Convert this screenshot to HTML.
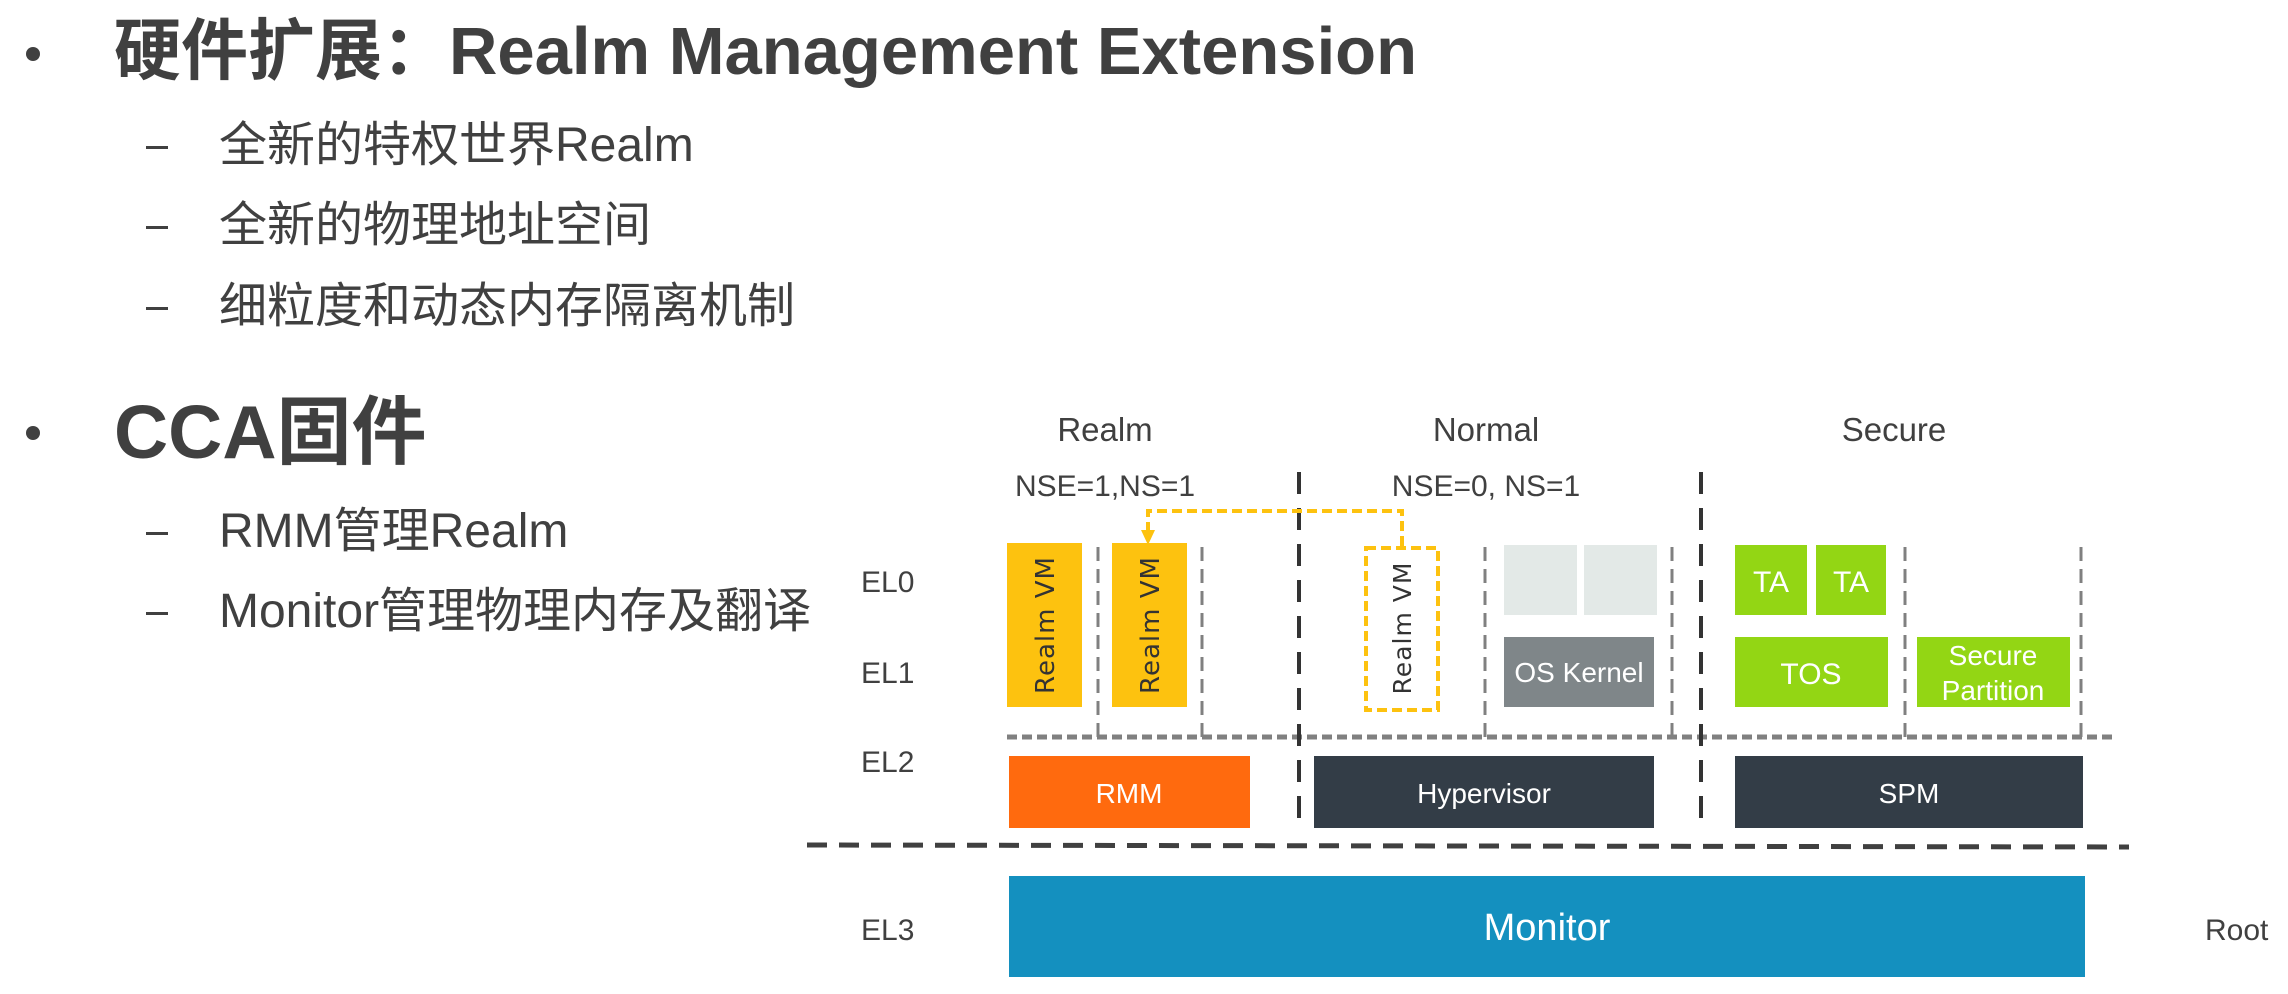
<!DOCTYPE html>
<html><head><meta charset="utf-8"><style>
html,body{margin:0;padding:0;background:#fff;}
body{width:2288px;height:994px;position:relative;overflow:hidden;font-family:"Liberation Sans","Noto Sans CJK SC",sans-serif;color:#404040;}
.t{position:absolute;white-space:nowrap;line-height:1;}
.b{font-weight:bold;}
.dot{position:absolute;width:14px;height:14px;border-radius:50%;background:#404040;}
.dash{position:absolute;width:22px;height:3px;background:#404040;}
</style></head><body>
<div class="dot" style="left:26px;top:47px"></div>
<div class="t b" style="left:114px;top:18px;font-size:67px;">硬件扩展：Realm Management Extension</div>
<div class="dash" style="left:146px;top:146px"></div>
<div class="t" style="left:219px;top:122px;font-size:48px;">全新的特权世界Realm</div>
<div class="dash" style="left:146px;top:226px"></div>
<div class="t" style="left:219px;top:202px;font-size:48px;">全新的物理地址空间</div>
<div class="dash" style="left:146px;top:307px"></div>
<div class="t" style="left:219px;top:283px;font-size:48px;">细粒度和动态内存隔离机制</div>
<div class="dot" style="left:26px;top:426px"></div>
<div class="t b" style="left:114px;top:395px;font-size:75px;">CCA固件</div>
<div class="dash" style="left:146px;top:532px"></div>
<div class="t" style="left:219px;top:508px;font-size:48px;">RMM管理Realm</div>
<div class="dash" style="left:146px;top:612px"></div>
<div class="t" style="left:219px;top:588px;font-size:48px;">Monitor管理物理内存及翻译</div>

<svg width="2288" height="994" style="position:absolute;left:0;top:0" font-family="Liberation Sans, DejaVu Sans, sans-serif">
<g fill="#404040" font-size="33" text-anchor="middle">
<text x="1105" y="441">Realm</text>
<text x="1486" y="441">Normal</text>
<text x="1894" y="441">Secure</text>
<text x="1105" y="496" font-size="30">NSE=1,NS=1</text>
<text x="1486" y="496" font-size="30">NSE=0, NS=1</text>
<g font-size="30" text-anchor="start">
<text x="861" y="592">EL0</text>
<text x="861" y="683">EL1</text>
<text x="861" y="772">EL2</text>
<text x="861" y="940">EL3</text>
<text x="2205" y="940">Root</text>
</g></g>
<g stroke="#808080" stroke-width="3" stroke-dasharray="14 8">
<line x1="1098" y1="547" x2="1098" y2="737"/>
<line x1="1202" y1="547" x2="1202" y2="737"/>
<line x1="1485" y1="547" x2="1485" y2="737"/>
<line x1="1672" y1="547" x2="1672" y2="737"/>
<line x1="1905" y1="547" x2="1905" y2="737"/>
<line x1="2081" y1="547" x2="2081" y2="737"/>
</g>
<line x1="1007" y1="737" x2="2114" y2="737" stroke="#808080" stroke-width="5" stroke-dasharray="10 5"/>
<g stroke="#333" stroke-width="4" stroke-dasharray="22 14">
<line x1="1299" y1="472" x2="1299" y2="828"/>
<line x1="1701" y1="472" x2="1701" y2="828"/>
</g>
<line x1="807" y1="845" x2="2129" y2="847" stroke="#404040" stroke-width="5" stroke-dasharray="20 12"/>
<rect x="1007" y="543" width="75" height="164" fill="#fdc20f"/>
<rect x="1112" y="543" width="75" height="164" fill="#fdc20f"/>
<rect x="1366" y="548" width="72" height="162" fill="#fff" stroke="#fdc20f" stroke-width="4" stroke-dasharray="10 5"/>
<path d="M1402 546 V511 H1148 V538" fill="none" stroke="#fdc20f" stroke-width="4" stroke-dasharray="10 5"/>
<path d="M1141 530 L1148 545 L1155 530 Z" fill="#fdc20f"/>
<g font-size="26" letter-spacing="1" text-anchor="middle" font-family="DejaVu Sans, sans-serif" fill="#333">
<text transform="translate(1054,625) rotate(-90)">Realm VM</text>
<text transform="translate(1159,625) rotate(-90)">Realm VM</text>
<text transform="translate(1411,628) rotate(-90)" font-size="25">Realm VM</text>
</g>
<rect x="1504" y="545" width="73" height="70" fill="#e3e9e7"/>
<rect x="1584" y="545" width="73" height="70" fill="#e3e9e7"/>
<rect x="1504" y="637" width="150" height="70" fill="#7f8689"/>
<rect x="1735" y="545" width="72" height="70" fill="#93d614"/>
<rect x="1816" y="545" width="70" height="70" fill="#93d614"/>
<rect x="1735" y="637" width="153" height="70" fill="#93d614"/>
<rect x="1917" y="637" width="153" height="70" fill="#93d614"/>
<rect x="1009" y="756" width="241" height="72" fill="#ff6a0e"/>
<rect x="1314" y="756" width="340" height="72" fill="#333d47"/>
<rect x="1735" y="756" width="348" height="72" fill="#333d47"/>
<rect x="1009" y="876" width="1076" height="101" fill="#1490bf"/>
<g fill="#fff" text-anchor="middle" font-size="28">
<text x="1579" y="682">OS Kernel</text>
<text x="1771" y="592" font-size="30">TA</text>
<text x="1851" y="592" font-size="30">TA</text>
<text x="1811" y="684" font-size="30">TOS</text>
<text x="1993" y="665">Secure</text>
<text x="1993" y="700">Partition</text>
<text x="1129" y="803">RMM</text>
<text x="1484" y="803">Hypervisor</text>
<text x="1909" y="803">SPM</text>
<text x="1547" y="940" font-size="38">Monitor</text>
</g>
</svg>
</body></html>
